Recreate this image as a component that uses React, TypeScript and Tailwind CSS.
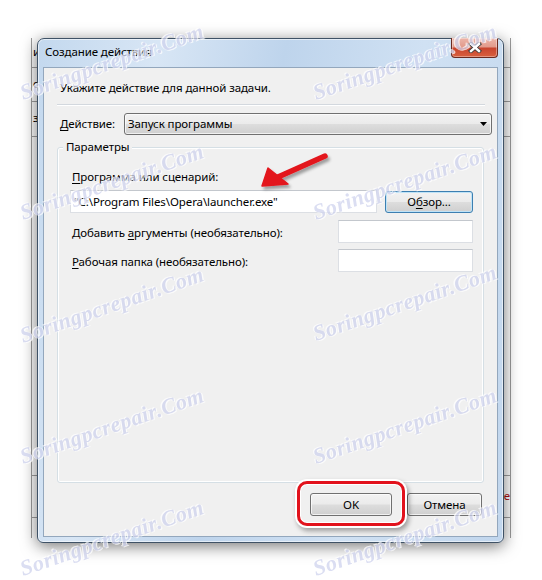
import type { ReactNode } from 'react';

const UI_FONT = "font-['Noto_Sans',_'Liberation_Sans',_sans-serif]";

const watermarks = [
  { x: 112, y: 62 }, { x: 405, y: 62 },
  { x: 112, y: 182 }, { x: 405, y: 182 },
  { x: 112, y: 305 }, { x: 405, y: 303 },
  { x: 112, y: 426 }, { x: 405, y: 426 },
  { x: 112, y: 538 }, { x: 405, y: 538 },
];

function Key({ children }: { children: ReactNode }) {
  return <span className="underline decoration-1 underline-offset-[2px]">{children}</span>;
}

function TextBox({ value, className }: { value?: string; className: string }) {
  return (
    <div
      className={`flex h-[23px] items-center border border-[#dcdfe4] border-t-[#c3c7cd] bg-white pl-[3px] ${className}`}
    >
      <span className="whitespace-nowrap">{value}</span>
    </div>
  );
}

function Button({ children, width, focused }: { children: ReactNode; width: string; focused?: boolean }) {
  return (
    <div
      className={`flex items-center justify-center rounded-[3px] border bg-[linear-gradient(180deg,#f2f2f2_0%,#ebebeb_48%,#dddddd_52%,#cfcfcf_100%)] ${width} ${
        focused
          ? 'border-[#3c7fb1] shadow-[inset_0_0_0_1px_#bfe3f7]'
          : 'border-[#707070] shadow-[inset_0_0_0_1px_rgba(255,255,255,0.7)]'
      }`}
    >
      {children}
    </div>
  );
}

function CloseGlyph() {
  return (
    <svg width="14" height="11" viewBox="0 0 14 11">
      <path d="M3 2 L11 9 M11 2 L3 9" stroke="#3b3b3b" strokeWidth="4.2" strokeLinecap="square" />
      <path d="M3 2 L11 9 M11 2 L3 9" stroke="#ffffff" strokeWidth="2.4" strokeLinecap="square" />
    </svg>
  );
}

function RedArrow() {
  return (
    <svg
      className="pointer-events-none absolute left-[250px] top-[145px] z-30"
      width="92"
      height="52"
      viewBox="0 0 92 52"
    >
      <defs>
        <filter id="arrowShadow" x="-20%" y="-30%" width="140%" height="170%">
          <feDropShadow dx="2" dy="3" stdDeviation="1.6" floodColor="#000" floodOpacity="0.35" />
        </filter>
      </defs>
      <g filter="url(#arrowShadow)">
        <path d="M75 11 L28 32" stroke="#e3141b" strokeWidth="5.5" strokeLinecap="round" />
        <path d="M12 41 L18 23 L38 39 Z" fill="#e3141b" stroke="#e3141b" strokeWidth="1.5" strokeLinejoin="round" />
      </g>
    </svg>
  );
}

export default function App() {
  return (
    <div className={`relative h-[580px] w-[542px] overflow-hidden bg-white text-[11.5px] leading-[16px] tracking-[-0.1px] text-black ${UI_FONT}`}>
      {/* window behind the dialog */}
      <div className="absolute left-[31px] top-[38px] flex h-[500px] w-[480px] flex-col border-x border-[#9c9c9c] bg-white">
        <div className="h-[30px] border-b border-[#a0a0a0] pl-[1px] pt-[6px]">имя</div>
        <div className="h-[34px] border-b border-[#a0a0a0] pl-[1px] pt-[8px]">общие</div>
        <div className="h-[35px] border-b border-[#a0a0a0] pl-[1px] pt-[8px]">задача</div>
        <div className="flex-1" />
        <div className="h-[42px] border-t border-[#a0a0a0] pl-[1px] pt-[12px] text-right text-[#b01010]">е</div>
        <div className="h-[21px] border-t border-[#a0a0a0]" />
      </div>

      {/* dialog */}
      <div className="relative z-10 ml-[37px] mt-[38px] flex h-[505px] w-[467px] flex-col rounded-t-[7px] rounded-b-[6px] border border-[#3f5266] bg-[linear-gradient(100deg,#c3d8ee_0%,#d8e6f5_22%,#bed4ec_45%,#d0e1f3_70%,#c1d6ed_100%)] shadow-[0_3px_16px_rgba(0,0,0,0.55),inset_0_0_0_1px_rgba(255,255,255,0.55)]">
        <div className="flex h-[28px] items-start pl-[7px] pr-[5px]">
          <span className="mt-[5px]">Создание действия</span>
          <div className="-mt-[1px] ml-auto flex h-[20px] w-[47px] items-center justify-center rounded-b-[4px] border border-t-0 border-[#6b2a20] bg-[linear-gradient(180deg,#ecb5a9_0%,#e29a8b_48%,#c8442e_52%,#d9603f_100%)] shadow-[inset_0_0_0_1px_rgba(255,255,255,0.35)]">
            <CloseGlyph />
          </div>
        </div>

        <div className="ml-[5px] flex h-[470px] w-[455px] flex-col border border-[#93a7bd] bg-[#f0f0f0]">
          <div className="pl-[16px] pt-[12px]">Укажите действие для данной задачи.</div>

          <div className="ml-[13px] mr-[12px] mt-[8px] h-[2px] border-t border-b border-t-[#d3d8de] border-b-white" />

          <div className="ml-[13px] mr-[5px] mt-[7px] flex h-[22px] items-center">
            <span className="w-[67px] pl-[3px]">
              <Key>Д</Key>ействие:
            </span>
            <div className="flex h-[22px] flex-1 items-center rounded-[3px] border border-[#707070] bg-[linear-gradient(180deg,#f2f2f2_0%,#ebebeb_48%,#dddddd_52%,#cfcfcf_100%)] pl-[3px] pr-[4px] shadow-[inset_0_0_0_1px_rgba(255,255,255,0.7)]">
              <span className="flex-1">Запуск программы</span>
              <svg width="7" height="4" viewBox="0 0 7 4">
                <path d="M0 0 H7 L3.5 4 Z" fill="#000" />
              </svg>
            </div>
          </div>

          <div className="ml-[13px] mr-[13px] mt-[12px] flex h-[336px] flex-col rounded-[3px] border border-[#d5dfe5] pl-[12px] pr-[10px] shadow-[inset_0_0_0_1px_#ffffff]">
            <span className="-ml-[7px] -mt-[9px] self-start bg-[#f0f0f0] px-[3px]">Параметры</span>

            <div className="mt-[14px] pl-[2px]">
              <Key>П</Key>рограмма или сценарий:
            </div>
            <div className="mt-[5px] flex items-end justify-between">
              <TextBox value={'"C:\\Program Files\\Opera\\launcher.exe"'} className="w-[307px]" />
              <Button width="h-[22px] w-[88px]" focused>
                О<Key>б</Key>зор...
              </Button>
            </div>

            <div className="mt-[7px] flex items-center justify-between">
              <span className="pl-[2px] pt-[3px]">
                Добавить <Key>а</Key>ргументы (необязательно):
              </span>
              <TextBox className="w-[135px]" />
            </div>

            <div className="mt-[6px] flex items-center justify-between">
              <span className="pl-[2px] pt-[3px]">
                <Key>Р</Key>абочая папка (необязательно):
              </span>
              <TextBox className="w-[135px]" />
            </div>
          </div>

          <div className="mr-[15px] mt-[10px] flex justify-end gap-[15px]">
            <Button width="h-[23px] w-[82px]">OK</Button>
            <Button width="h-[23px] w-[75px]">Отмена</Button>
          </div>
        </div>
      </div>

      {/* highlight around OK */}
      <div className="pointer-events-none absolute left-[297px] top-[481px] z-20 h-[45px] w-[108px] rounded-[10px] border-[3px] border-[#e2121c] shadow-[0_0_0_2px_#ffffff,2px_3px_5px_2px_rgba(0,0,0,0.35),inset_0_0_0_1px_#ffffff]" />

      <RedArrow />

      {/* watermarks */}
      {watermarks.map((w, i) => (
        <span
          key={i}
          className="pointer-events-none absolute z-40 -translate-x-1/2 -translate-y-1/2 -rotate-[19deg] whitespace-nowrap font-['Liberation_Serif',_serif] text-[22px] font-bold italic leading-none tracking-[0.5px] text-[#cfd3ee] opacity-75 [text-shadow:0_0_1px_#ffffff,1px_1px_0_#ffffff,-1px_-1px_0_#ffffff]"
          style={{ left: w.x, top: w.y }}
        >
          Soringpcrepair.Com
        </span>
      ))}
    </div>
  );
}
